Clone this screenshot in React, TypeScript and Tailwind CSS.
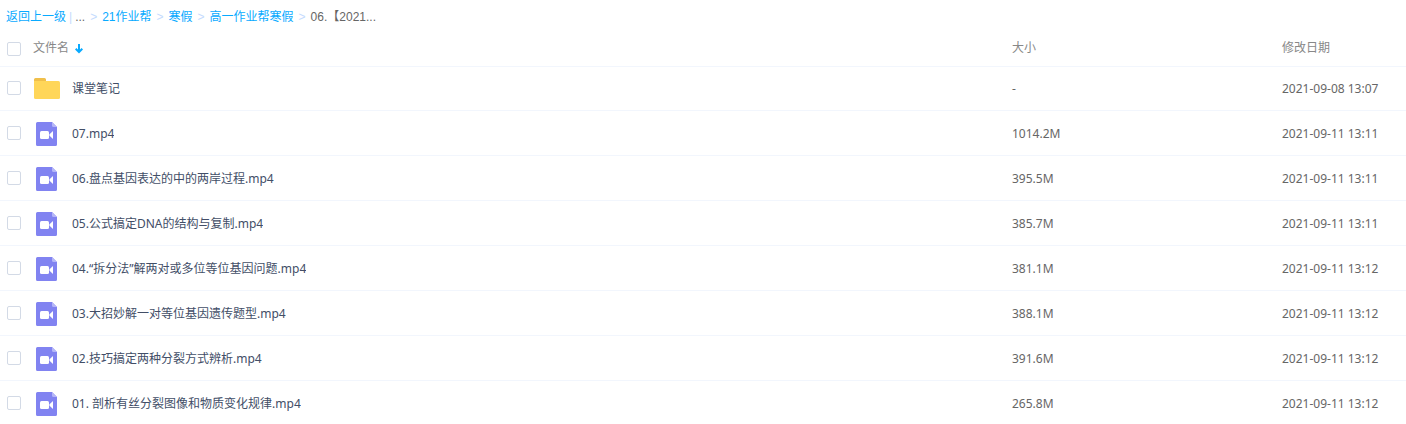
import { useState } from 'react';

interface FileItem {
  id: number;
  name: string;
  type: 'folder' | 'video';
  size: string;
  modified: string;
}

const files: FileItem[] = [
  { id: 1, name: '课堂笔记', type: 'folder', size: '-', modified: '2021-09-08 13:07' },
  { id: 2, name: '07.mp4', type: 'video', size: '1014.2M', modified: '2021-09-11 13:11' },
  { id: 3, name: '06.盘点基因表达的中的两岸过程.mp4', type: 'video', size: '395.5M', modified: '2021-09-11 13:11' },
  { id: 4, name: '05.公式搞定DNA的结构与复制.mp4', type: 'video', size: '385.7M', modified: '2021-09-11 13:11' },
  { id: 5, name: '04.“拆分法”解两对或多位等位基因问题.mp4', type: 'video', size: '381.1M', modified: '2021-09-11 13:12' },
  { id: 6, name: '03.大招妙解一对等位基因遗传题型.mp4', type: 'video', size: '388.1M', modified: '2021-09-11 13:12' },
  { id: 7, name: '02.技巧搞定两种分裂方式辨析.mp4', type: 'video', size: '391.6M', modified: '2021-09-11 13:12' },
  { id: 8, name: '01. 剖析有丝分裂图像和物质变化规律.mp4', type: 'video', size: '265.8M', modified: '2021-09-11 13:12' },
];

const parents = ['21作业帮', '寒假', '高一作业帮寒假'];

function FolderIcon() {
  return (
    <svg width="26" height="21" viewBox="0 0 26 21" aria-hidden="true">
      <path d="M0 5V1.5A1.5 1.5 0 0 1 1.5 0h9A1.5 1.5 0 0 1 12 1.5V5z" fill="#f0bf4b" />
      <path d="M0 3h24.5A1.5 1.5 0 0 1 26 4.5v15a1.5 1.5 0 0 1-1.5 1.5h-23A1.5 1.5 0 0 1 0 19.5z" fill="#ffd659" />
    </svg>
  );
}

function VideoIcon() {
  return (
    <svg width="21" height="24" viewBox="0 0 21 24" aria-hidden="true">
      <path d="M1.5 0H16l5 5v17.5a1.5 1.5 0 0 1-1.5 1.5h-18A1.5 1.5 0 0 1 0 22.5v-21A1.5 1.5 0 0 1 1.5 0z" fill="#8183f1" />
      <path d="M16 0l5 5h-3.5A1.5 1.5 0 0 1 16 3.5z" fill="#b5b6f8" />
      <rect x="4" y="9" width="9" height="8" rx="1.5" fill="#fff" />
      <path d="M13.5 12.2L17 9v8l-3.5-3.2z" fill="#fff" />
    </svg>
  );
}

interface CheckBoxProps {
  label: string;
  checked: boolean;
  onChange: () => void;
}

function CheckBox({ label, checked, onChange }: CheckBoxProps) {
  return (
    <input
      type="checkbox"
      aria-label={label}
      checked={checked}
      onChange={onChange}
      className="block size-3.5 appearance-none rounded-xs border border-[#d3dae6] bg-white checked:border-[#09aaff] checked:bg-[#09aaff]"
    />
  );
}

export default function App() {
  const [selected, setSelected] = useState<number[]>([]);
  const [descending, setDescending] = useState(true);

  const rows = descending ? files : [...files].reverse();
  const allSelected = selected.length === files.length;

  const toggle = (id: number) => {
    setSelected((prev) => (prev.includes(id) ? prev.filter((x) => x !== id) : [...prev, id]));
  };

  return (
    <div className="h-screen overflow-hidden bg-white text-xs font-['Noto_Sans','Noto_Sans_CJK_SC',sans-serif]">
      {/* Breadcrumb */}
      <nav className="flex h-[34px] items-center px-1.5 text-[#666] font-['Liberation_Sans','Noto_Sans_CJK_SC',sans-serif]">
        <a href="#back" className="text-[#09aaff]">返回上一级</a>
        <span className="mx-[3px] text-[#c4dbfe]">|</span>
        <span>...</span>
        {parents.map((name) => (
          <span key={name} className="flex">
            <span className="mx-[5px] text-[#c4dbfe]">&gt;</span>
            <a href={`#${name}`} className="text-[#09aaff]">{name}</a>
          </span>
        ))}
        <span className="mx-[5px] text-[#c4dbfe]">&gt;</span>
        <span>06.【2021...</span>
      </nav>

      {/* File list */}
      <table className="w-full table-fixed border-collapse text-left text-[#666]">
        <thead>
          <tr className="h-8 border-b border-[#f2f6fd] text-[#888]">
            <th className="w-[33px] pb-0.5 pl-[7px]">
              <CheckBox
                label="全选"
                checked={allSelected}
                onChange={() => setSelected(allSelected ? [] : files.map((f) => f.id))}
              />
            </th>
            <th className="pb-1 font-normal">
              <button className="flex items-center gap-1.5" onClick={() => setDescending(!descending)}>
                文件名
                <svg width="8" height="12" viewBox="0 0 8 12" fill="none" stroke="#09aaff" strokeWidth="2" aria-hidden="true">
                  <path d="M4 2v8.5M0.700 6.700L4 10l3.300-3.300" />
                </svg>
              </button>
            </th>
            <th className="w-[270px] pb-1 font-normal">大小</th>
            <th className="w-[124px] pb-1 font-normal">修改日期</th>
          </tr>
        </thead>
        <tbody>
          {rows.map((file) => (
            <tr key={file.id} className="h-[45px] border-b border-[#f2f6fd] first:h-11 hover:bg-[#f4fbff]">
              <td className="pl-[7px]">
                <CheckBox label={file.name} checked={selected.includes(file.id)} onChange={() => toggle(file.id)} />
              </td>
              <td>
                <div className="flex items-center gap-3 pl-px">
                  <span className="flex w-[26px] shrink-0">
                    {file.type === 'folder' ? <FolderIcon /> : <span className="pt-0.5 pl-0.5"><VideoIcon /></span>}
                  </span>
                  <a href={`#file-${file.id}`} className="truncate pt-0.5 text-[#424e67]">{file.name}</a>
                </div>
              </td>
              <td className="pt-0.5">{file.size}</td>
              <td className="pt-0.5">{file.modified}</td>
            </tr>
          ))}
        </tbody>
      </table>
    </div>
  );
}
